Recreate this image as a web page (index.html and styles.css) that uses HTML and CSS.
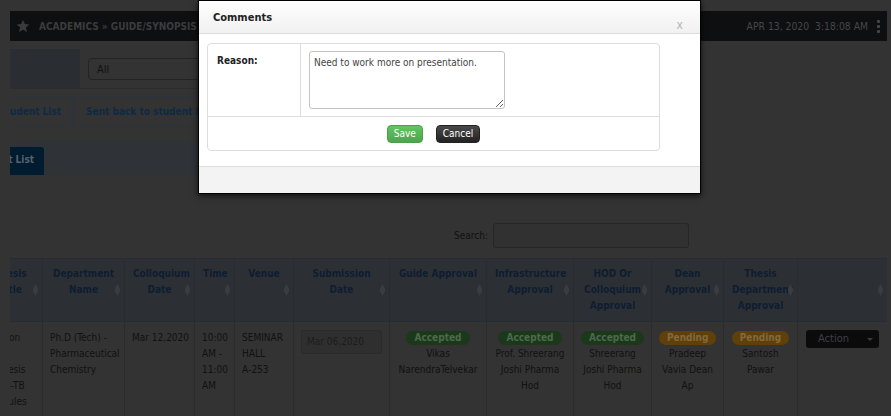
FILE: index.html
```html
<!DOCTYPE html>
<html lang="en">
<head>
    <meta charset="UTF-8">
    <meta name="viewport" content="width=device-width, initial-scale=1.0">
    <title>Guide / Synopsis Approval</title>
    <link rel="stylesheet" href="styles.css">
</head>
<body>

    <div class="topbar">
        <svg class="star" viewBox="0 0 24 24"><path d="M12 1.5l3.1 7.2 7.8.7-5.9 5.2 1.8 7.7L12 18.3l-6.8 4 1.8-7.7-5.9-5.2 7.8-.7z"/></svg>
        <span class="crumb">Academics &raquo; Guide/Synopsis Approval</span>
        <span class="clock">APR 13, 2020&nbsp;&nbsp;3:18:08 AM</span>
        <span class="kebab"><i></i><i></i><i></i></span>
    </div>

    <div class="viewport">
        <div class="sheet">
            <div class="filter-row">
                <div class="filter-label">Status</div>
                <div class="filter-field"><div class="select">All</div></div>
            </div>

            <ul class="tabs">
                <li>Student List</li>
                <li>Sent back to student list</li>
            </ul>

            <div class="subtabs"><span class="subtab">Student List</span></div>

            <div class="search-row">
                <label for="search">Search:</label>
                <input type="text" id="search">
            </div>

            <table class="grid">
                <colgroup>
                    <col class="w-title"><col class="w-dept"><col class="w-date"><col class="w-time">
                    <col class="w-venue"><col class="w-sub"><col class="w-guide"><col class="w-infra">
                    <col class="w-hod"><col class="w-dean"><col class="w-thesis"><col class="w-act">
                </colgroup>
                <thead>
                    <tr>
                        <th>Thesis Title</th>
                        <th>Department Name</th>
                        <th>Colloquium Date</th>
                        <th>Time</th>
                        <th>Venue</th>
                        <th>Submission Date</th>
                        <th>Guide Approval</th>
                        <th>Infrastructure Approval</th>
                        <th>HOD Or Colloquium Approval</th>
                        <th>Dean Approval</th>
                        <th>Thesis Department Approval</th>
                        <th></th>
                    </tr>
                </thead>
                <tbody>
                    <tr>
                        <td>Isolation and Synthesis of anti-TB Molecules</td>
                        <td>Ph.D (Tech) - Pharmaceutical Chemistry</td>
                        <td class="nowrap">Mar 12,2020</td>
                        <td>10:00 AM - 11:00 AM</td>
                        <td>SEMINAR HALL A&#8209;253</td>
                        <td><div class="datebox">Mar 06,2020</div></td>
                        <td class="center"><div><span class="badge ok">Accepted</span></div>Vikas NarendraTelvekar</td>
                        <td class="center"><div><span class="badge ok">Accepted</span></div>Prof. Shreerang Joshi Pharma Hod</td>
                        <td class="center"><div><span class="badge ok">Accepted</span></div>Shreerang Joshi Pharma Hod</td>
                        <td class="center"><div><span class="badge wait">Pending</span></div>Pradeep Vavia Dean Ap</td>
                        <td class="center"><div><span class="badge wait">Pending</span></div>Santosh Pawar</td>
                        <td><div class="action"><span>Action</span><b class="caret"></b></div></td>
                    </tr>
                </tbody>
            </table>
        </div>
    </div>

    <div class="modal">
        <div class="modal-head">
            <h3>Comments</h3>
            <span class="close">x</span>
        </div>
        <div class="modal-body">
            <table class="form-box">
                <tr>
                    <th>Reason:</th>
                    <td><textarea>Need to work more on presentation.</textarea></td>
                </tr>
                <tr>
                    <td colspan="2" class="btns">
                        <button class="btn save">Save</button>
                        <button class="btn cancel">Cancel</button>
                    </td>
                </tr>
            </table>
        </div>
        <div class="modal-foot"></div>
    </div>

</body>
</html>
```

FILE: styles.css
```css
body {
    margin: 0;
    padding: 11px 4px 0 10px;
    height: 416px;
    box-sizing: border-box;
    overflow: hidden;
    background-color: #333;
    font-family: "DejaVu Sans Condensed", "DejaVu Sans", sans-serif;
    font-size: 10px;
    color: #111;
}

/* top bar */
.topbar {
    height: 30px;
    background-color: #0e0f11;
    display: flex;
    align-items: center;
    padding: 0 7px 0 6px;
}
.star {
    width: 14px;
    height: 14px;
    fill: #3a3a3a;
    margin-right: 9px;
}
.crumb {
    font-weight: bold;
    font-size: 10px;
    text-transform: uppercase;
    color: #3c3c3c;
    white-space: nowrap;
}
.clock {
    margin-left: auto;
    font-size: 10.3px;
    color: #474747;
}
.kebab {
    display: flex;
    flex-direction: column;
    gap: 2px;
    margin-left: 9px;
}
.kebab i {
    width: 3px;
    height: 3px;
    background-color: #464646;
    border-radius: 1px;
}

/* scrolled page content */
.viewport {
    overflow: hidden;
    margin-top: 8px;
}
.sheet {
    margin-left: -60px;
}

.filter-row {
    display: flex;
    width: 640px;
    height: 39px;
    border-bottom: 1px solid #2d2d2d;
}
.filter-label {
    width: 130px;
    background-color: #2a2e33;
    color: #0e1d30;
    font-weight: bold;
    padding: 12px 8px;
    box-sizing: border-box;
}
.filter-field {
    padding: 9px 8px;
}
.select {
    width: 250px;
    height: 22px;
    box-sizing: border-box;
    border: 1px solid #232323;
    border-radius: 4px;
    padding: 0 8px;
    line-height: 21px;
    font-size: 11px;
    color: #111;
}

.tabs {
    list-style: none;
    margin: 7px 0 0;
    padding: 2px 0 2px 40px;
    width: 600px;
    display: flex;
    gap: 5px;
    background-color: #2f3236;
}
.tabs li {
    background-color: #333;
    padding: 1px 10px 0 9px;
    line-height: 26px;
    font-weight: bold;
    color: #0d2a45;
    white-space: nowrap;
}
.tabs li + li {
    padding-left: 10px;
}

.subtabs {
    margin-top: 15px;
    width: 600px;
    height: 33px;
    box-sizing: border-box;
    padding: 5px 0 0 12px;
    display: flex;
    background-color: #2f3236;
}
.subtab {
    background-color: #011b2f;
    color: #56626e;
    font-weight: bold;
    line-height: 26px;
    padding: 0 10px;
    border-radius: 3px 3px 0 0;
}

.search-row {
    display: flex;
    justify-content: flex-end;
    align-items: center;
    gap: 5px;
    margin: 48px 198px 10px 0;
}
.search-row input {
    width: 196px;
    height: 25px;
    box-sizing: border-box;
    border: 1px solid #262626;
    border-radius: 3px;
    background-color: #313131;
}

/* table */
.grid {
    margin-left: 28px;
    width: 909px;
    border-collapse: collapse;
    table-layout: fixed;
}
.w-title { width: 64px; }
.w-dept { width: 82px; }
.w-date { width: 70px; }
.w-time { width: 40px; }
.w-venue { width: 59px; }
.w-sub { width: 96px; }
.w-guide { width: 97px; }
.w-infra { width: 87px; }
.w-hod { width: 78px; }
.w-dean { width: 72px; }
.w-thesis { width: 74px; }
.w-act { width: 90px; }

.grid th {
    position: relative;
    background-color: #2c3035;
    color: #0e1d30;
    font-weight: bold;
    line-height: 16px;
    height: 46px;
    padding: 7px 8px;
    vertical-align: top;
    text-align: center;
    border: 1px solid #282b2f;
}
.grid th::after {
    content: "";
    position: absolute;
    right: 4px;
    top: 50%;
    margin-top: -6px;
    width: 5px;
    height: 12px;
    background-color: #393c40;
    clip-path: polygon(50% 0, 100% 40%, 100% 60%, 50% 100%, 0 60%, 0 40%);
}
.grid td {
    padding: 8px 7px;
    line-height: 16px;
    vertical-align: top;
    border-left: 1px solid #2c2c2c;
    border-right: 1px solid #2c2c2c;
    height: 90px;
}
.grid td:first-child {
    padding-left: 3px;
}
.grid td.center {
    text-align: center;
}
.grid td.nowrap {
    white-space: nowrap;
}

.datebox {
    width: 81px;
    height: 24px;
    box-sizing: border-box;
    border: 1px solid #2b2b2b;
    background-color: #2f2f2f;
    border-radius: 2px;
    padding: 0 5px;
    line-height: 22px;
    color: #1c1c1c;
}
.badge {
    display: inline-block;
    line-height: 14px;
    padding: 0 8px;
    border-radius: 8px;
    font-weight: bold;
}
.badge.ok {
    background-color: #1b381b;
    color: #4d6a4d;
}
.badge.wait {
    background-color: #5e4008;
    color: #84693d;
}
.action {
    display: flex;
    align-items: center;
    width: 73px;
    height: 18px;
    box-sizing: border-box;
    padding: 0 6px 0 12px;
    margin-left: 1px;
    background-color: #0b0b0b;
    border-radius: 3px;
    color: #3d4046;
    font-size: 11px;
}
.caret {
    margin-left: auto;
    border-left: 3px solid transparent;
    border-right: 3px solid transparent;
    border-top: 3px solid #3a3a3a;
}

/* dialog */
.modal {
    position: absolute;
    top: 0;
    left: 198px;
    width: 501px;
    border: 1px solid #000;
    background-color: #fff;
    box-shadow: 0 2px 6px rgba(0, 0, 0, 0.7);
}
.modal-head {
    height: 32px;
    display: flex;
    justify-content: space-between;
    padding: 0 17px 0 14px;
    background: linear-gradient(#fefefe, #f1f1f1);
    border-bottom: 1px solid #dcdcdc;
}
.modal-head h3 {
    margin: 0;
    line-height: 33px;
    font-size: 11px;
    color: #222;
}
.close {
    align-self: flex-end;
    padding-bottom: 1px;
    font-size: 12px;
    color: #b4b4b4;
}
.modal-body {
    padding: 9px 8px 15px;
}
.form-box {
    width: 453px;
    border: 1px solid #ddd;
    border-radius: 4px;
    border-spacing: 0;
}
.form-box th {
    width: 74px;
    text-align: left;
    vertical-align: top;
    padding: 11px 9px;
    border-right: 1px solid #ddd;
    border-bottom: 1px solid #ddd;
    color: #222;
    font-size: 10px;
}
.form-box td {
    padding: 7px 8px;
    border-bottom: 1px solid #ddd;
}
.form-box tr:last-child td {
    border-bottom: none;
}
.form-box textarea {
    display: block;
    width: 196px;
    height: 58px;
    box-sizing: border-box;
    border: 1px solid #c4c4c4;
    border-radius: 3px;
    padding: 5px 4px;
    font-family: "DejaVu Sans Condensed", "DejaVu Sans", sans-serif;
    font-size: 10px;
    color: #444;
}
.btns {
    text-align: center;
    height: 19px;
}
.btn {
    height: 18px;
    padding: 0 6px;
    margin: 0 5px;
    border-radius: 4px;
    font-family: "DejaVu Sans Condensed", "DejaVu Sans", sans-serif;
    font-size: 10px;
    color: #fff;
    cursor: pointer;
}
.save {
    background: linear-gradient(#62c462, #4ca64c);
    border: 1px solid #49a049;
}
.cancel {
    background: linear-gradient(#4a4a4a, #222);
    border: 1px solid #222;
}
.modal-foot {
    height: 26px;
    background-color: #f3f3f3;
    border-top: 1px solid #ddd;
}
```
